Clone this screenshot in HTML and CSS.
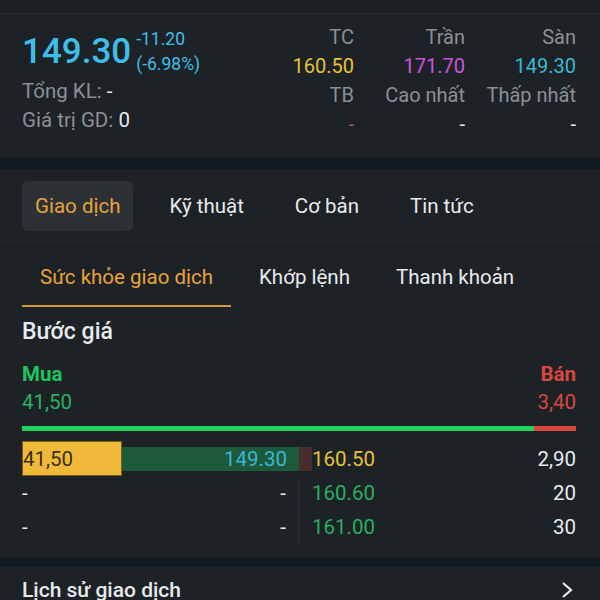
FILE: index.html
```html
<!DOCTYPE html>
<html lang="vi">
<head>
  <meta charset="UTF-8">
  <title>Giao dịch</title>
  <link rel="stylesheet" href="styles.css">
</head>
<body>
  <div class="topbar"></div>

  <section class="panel quote">
    <div class="quote-left">
      <div class="price-row">
        <span class="price">149.30</span>
        <div class="change">
          <span>-11.20</span>
          <span>(-6.98%)</span>
        </div>
      </div>
      <div class="info">Tổng KL: <span class="val">-</span></div>
      <div class="info">Giá trị GD: <span class="val">0</span></div>
    </div>
    <div class="quote-grid">
      <span class="lbl">TC</span>
      <span class="lbl">Trần</span>
      <span class="lbl">Sàn</span>
      <span class="ref">160.50</span>
      <span class="ceil">171.70</span>
      <span class="floor">149.30</span>
      <span class="lbl">TB</span>
      <span class="lbl">Cao nhất</span>
      <span class="lbl">Thấp nhất</span>
      <span class="dash red">-</span>
      <span class="dash">-</span>
      <span class="dash">-</span>
    </div>
  </section>

  <section class="panel trade">
    <nav class="tabs">
      <a class="tab active">Giao dịch</a>
      <a class="tab">Kỹ thuật</a>
      <a class="tab">Cơ bản</a>
      <a class="tab">Tin tức</a>
    </nav>

    <nav class="subtabs">
      <a class="subtab active">Sức khỏe giao dịch</a>
      <a class="subtab">Khớp lệnh</a>
      <a class="subtab">Thanh khoản</a>
    </nav>

    <div class="book">
      <h2>Bước giá</h2>
      <div class="sides">
        <span class="buy bold">Mua</span>
        <span class="sell bold">Bán</span>
      </div>
      <div class="sides totals">
        <span class="buy">41,50</span>
        <span class="sell">3,40</span>
      </div>
      <div class="ratio">
        <div class="ratio-buy" style="width: 92.4%"></div>
        <div class="ratio-sell"></div>
      </div>

      <div class="row first">
        <div class="bid">
          <span class="flash">41,50</span>
          <span class="depth-bid"><span class="bid-price">149.30</span></span>
        </div>
        <div class="ask">
          <span class="depth-ask"></span>
          <span class="ask-price ref">160.50</span>
          <span class="ask-vol">2,90</span>
        </div>
      </div>
      <div class="row">
        <div class="bid">
          <span>-</span>
          <span class="bid-price">-</span>
        </div>
        <div class="ask">
          <span class="ask-price up">160.60</span>
          <span class="ask-vol">20</span>
        </div>
      </div>
      <div class="row">
        <div class="bid">
          <span>-</span>
          <span class="bid-price">-</span>
        </div>
        <div class="ask">
          <span class="ask-price up">161.00</span>
          <span class="ask-vol">30</span>
        </div>
      </div>
    </div>
  </section>

  <section class="panel history">
    <span>Lịch sử giao dịch</span>
    <svg class="chevron" width="14" height="18" viewBox="0 0 14 18">
      <path d="M3 2l8 7-8 7" fill="none" stroke="#e8eaec" stroke-width="2.2"/>
    </svg>
  </section>
</body>
</html>
```

FILE: styles.css
```css
body {
  margin: 0;
  background-color: #131920;
  font-family: Roboto, "Noto Sans", sans-serif;
  color: #e8eaec;
}

a {
  text-decoration: none;
}

.topbar {
  height: 13px;
  background-color: #1b2024;
  border-bottom: 1px solid #262b30;
}

.panel {
  background-color: #1d2227;
  padding: 0 24px 0 22px;
}

/* quote block */
.quote {
  display: flex;
  justify-content: space-between;
  height: 144px;
  box-sizing: border-box;
  padding-top: 8px;
  margin-bottom: 11px;
}

.quote-left {
  padding-top: 4px;
}

.price-row {
  display: flex;
  align-items: center;
  height: 51px;
  gap: 5px;
}

.price {
  font-size: 35px;
  font-weight: 500;
  color: #3ebfea;
}

.change {
  display: flex;
  flex-direction: column;
  font-size: 17.5px;
  line-height: 25px;
  color: #3ebfea;
}

.info {
  font-size: 20.5px;
  line-height: 29px;
  color: #8b9096;
}

.info .val {
  color: #e8eaec;
}

.quote-grid {
  display: grid;
  grid-template-columns: repeat(3, 111px);
  grid-auto-rows: 29px;
  align-items: center;
  text-align: right;
  font-size: 20px;
}

.lbl {
  color: #8b9096;
}

.ref {
  color: #e6c13a;
}

.ceil {
  color: #cf52de;
}

.floor {
  color: #3bb7d6;
}

.dash {
  color: #e8eaec;
}

.dash.red {
  color: #b5545a;
}

/* tabs */
.trade {
  padding-bottom: 14px;
  margin-bottom: 9px;
}

.tabs {
  display: flex;
  gap: 21px;
  padding: 12px 0 10px;
  margin: 0 -24px 0 -22px;
  padding-left: 22px;
  border-bottom: 1px solid #252a2f;
}

.tab {
  height: 50px;
  line-height: 50px;
  padding: 0 15px;
  font-size: 20.5px;
  color: #e8eaec;
  border-radius: 6px;
}

.tab.active {
  padding: 0 13px;
  background-color: #2c3136;
  color: #e9a23b;
}

.subtabs {
  display: flex;
  gap: 10px;
}

.subtab {
  padding: 22px 18px 15px;
  line-height: 26px;
  font-size: 20.5px;
  color: #e8eaec;
  border-bottom: 2px solid transparent;
}

.subtab.active {
  color: #e9a23b;
  border-bottom-color: #d59838;
}

/* order book */
.book h2 {
  margin: 0;
  padding-top: 12px;
  font-size: 23px;
  font-weight: 500;
  line-height: 26px;
}

.sides {
  display: flex;
  justify-content: space-between;
  font-size: 20.5px;
  line-height: 28px;
}

.sides:first-of-type {
  margin-top: 15px;
}

.bold {
  font-weight: 700;
}

.buy {
  color: #1ec55c;
}

.totals .buy {
  color: #2bb062;
}

.sell {
  color: #d8483f;
}

.ratio {
  display: flex;
  height: 5px;
  margin: 10px 0 10px;
}

.ratio-buy {
  background-color: #1fd65a;
}

.ratio-sell {
  flex: 1;
  background-color: #d9463c;
}

.row {
  display: grid;
  grid-template-columns: 1fr 1fr;
  height: 34px;
  font-size: 20.5px;
  align-items: center;
}

.row.first {
  height: 35px;
}

.bid {
  display: flex;
  justify-content: space-between;
  align-items: center;
  height: 100%;
  padding-right: 12px;
  border-right: 1px solid #2a2f34;
}

.row.first .bid {
  padding-right: 0;
  border-right: none;
}

.flash {
  width: 100px;
  height: 35px;
  line-height: 35px;
  box-sizing: border-box;
  background-color: #f0b93a;
  border: 1px solid #7a5a1a;
  color: #3a2e14;
}

.depth-bid {
  flex: 1;
  height: 24px;
  line-height: 24px;
  background-color: #1d5a3c;
  text-align: right;
  padding-right: 12px;
}

.bid-price {
  color: #e8eaec;
}

.depth-bid .bid-price {
  color: #3bb7d6;
}

.ask {
  display: flex;
  align-items: center;
  height: 100%;
  padding-left: 13px;
}

.row.first .ask {
  padding-left: 0;
}

.depth-ask {
  width: 13px;
  height: 24px;
  background-color: #4a2c2c;
}

.ask-price.up {
  color: #27b060;
}

.ask-vol {
  margin-left: auto;
}

/* history */
.history {
  display: flex;
  justify-content: space-between;
  align-items: center;
  height: 46px;
  font-size: 21px;
  font-weight: 500;
}

.chevron {
  margin-right: 2px;
}
```
